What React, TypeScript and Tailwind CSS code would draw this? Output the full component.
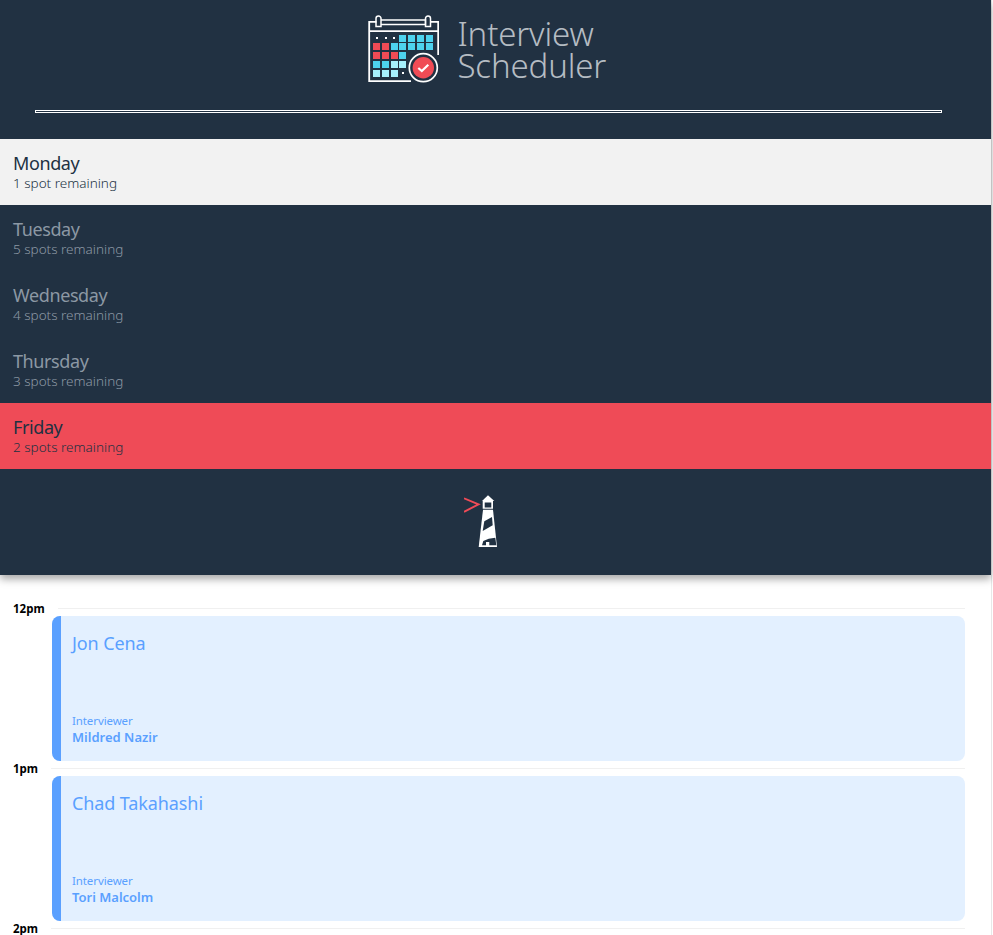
const days = [
  { name: "Monday", spots: "1 spot remaining", state: "selected" },
  { name: "Tuesday", spots: "5 spots remaining", state: "idle" },
  { name: "Wednesday", spots: "4 spots remaining", state: "idle" },
  { name: "Thursday", spots: "3 spots remaining", state: "idle" },
  { name: "Friday", spots: "2 spots remaining", state: "hover" },
];

const appointments = [
  { time: "12pm", student: "Jon Cena", interviewer: "Mildred Nazir" },
  { time: "1pm", student: "Chad Takahashi", interviewer: "Tori Malcolm" },
];

const dayStyles: Record<string, string> = {
  selected: "bg-[#f2f2f2] text-[#213142]",
  idle: "bg-[#213142] text-[#8c98a4]",
  hover: "bg-[#ef4b57] text-[#213142]",
};

const cyan = "#4dd2ee";
const red = "#f04b55";
const pale = "#a6f0fd";

const cellX = [5, 14, 23, 31, 40, 49, 58];
const cellY = [20, 28, 37, 46, 55];

// [col, row, colour] for the calendar's day cells
const cells: [number, number, string][] = [
  [3, 0, cyan], [4, 0, cyan], [5, 0, cyan], [6, 0, cyan],
  [0, 1, red], [1, 1, red], [2, 1, cyan], [3, 1, cyan], [4, 1, cyan], [5, 1, cyan], [6, 1, cyan],
  [0, 2, red], [1, 2, red], [2, 2, red], [3, 2, cyan],
  [0, 3, cyan], [1, 3, cyan], [2, 3, pale], [3, 3, pale],
  [0, 4, pale], [1, 4, pale], [2, 4, pale],
];

const CalendarLogo = () => (
  <svg width="71" height="68" viewBox="0 0 71 68" fill="none" className="shrink-0">
    <path d="M62 6.8H70.2V40M8.5 6.8H1.2V66.2H43" stroke="white" strokeWidth="1.8" />
    <path d="M1.2 16.2H70.2" stroke="white" strokeWidth="1.8" />
    <path d="M13 5H57.5V9.5H13" stroke="white" strokeWidth="1.4" />
    <path d="M8 11.5V3.5a2.5 2.5 0 0 1 5 0V11.5Z" stroke="white" strokeWidth="1.5" />
    <path d="M57.5 11.5V3.5a2.5 2.5 0 0 1 5 0V11.5Z" stroke="white" strokeWidth="1.5" />
    <rect x="8" y="22" width="2" height="2" fill="white" />
    <rect x="17" y="22" width="2" height="2" fill="white" />
    <rect x="25" y="22" width="2" height="2" fill="white" />
    <rect x="34" y="57" width="2" height="2" fill="white" />
    {cells.map(([col, row, fill], i) => (
      <rect key={i} x={cellX[col]} y={cellY[row]} width="7" height="7" fill={fill} />
    ))}
    <circle cx="55.3" cy="52.7" r="14" fill="#213142" stroke="white" strokeWidth="1.7" />
    <circle cx="55.3" cy="52.7" r="10.7" fill={red} />
    <path d="M50.3 53L53.8 56L60.3 49.7" stroke="white" strokeWidth="2.2" />
  </svg>
);

const Lighthouse = () => (
  <svg width="34" height="53" viewBox="0 0 34 53">
    <path d="M0 3.3L14.5 9.4L0 16.8" fill="none" stroke="#ef4b57" strokeWidth="1.9" />
    <path d="M24 0.3L30.3 6H18Z" fill="white" />
    <path d="M18.7 6H29V13.7H18.7ZM20.7 7.5V12.5H27.3V7.5Z" fill="white" fillRule="evenodd" />
    <path d="M19 14.7H29L33 52H14.7Z" fill="white" />
    <path d="M20.3 26.3L28 22L28.7 30.3L18.7 36Z" fill="#213142" />
    <path d="M18 50.3L19.3 46L24.7 43.7L31.3 42.7L32.3 50.3H25.3V47H22V50.3Z" fill="#213142" />
  </svg>
);

const TimeRow = ({ time }: { time: string }) => (
  <div className="flex items-center gap-[13px] h-0">
    <span className="mt-[2px] text-[11.5px] leading-none font-bold text-black">{time}</span>
    <hr className="flex-1 border-0 h-px bg-[#f0f0f0]" />
  </div>
);

export default function App() {
  return (
    <div className="h-[935px] overflow-hidden bg-white font-['Noto_Sans',sans-serif]">
      <main className="w-[992px] h-full border-r border-[#e8e8e8]">
        <nav className="relative z-10 bg-[#213142] shadow-[0_4px_8px_rgba(0,0,0,0.35)]">
          <header className="h-[139px] pl-[35px] pr-[49px] pt-[15px]">
            <div className="flex justify-center gap-[19px] h-[68px] pr-[2px]">
              <CalendarLogo />
              <h1 className="text-[33px] leading-[32px] pt-[3px] font-light tracking-[-0.15px] text-[#b5bcc3] w-[150px]">
                Interview Scheduler
              </h1>
            </div>
            <hr className="mt-[27px] h-[3px] border border-white bg-[#213142]" />
          </header>
          <ul>
            {days.map((day) => (
              <li key={day.name} className={`h-[66px] pl-[13px] pt-[14px] ${dayStyles[day.state]}`}>
                <h2 className="text-[18px] leading-[21px] font-normal tracking-[-0.4px]">{day.name}</h2>
                <h3 className="text-[13.5px] leading-[18px] font-light">{day.spots}</h3>
              </li>
            ))}
          </ul>
          <div className="h-[106px] flex justify-center pt-[26px] pr-[29px]">
            <Lighthouse />
          </div>
        </nav>
        <section className="pt-[33px] pl-[13px] pr-[26px]">
          {appointments.map((appt) => (
            <article key={appt.time} className="h-[160px]">
              <TimeRow time={appt.time} />
              <div className="ml-[39px] mt-[8px] h-[145px] flex overflow-hidden rounded-lg bg-[#e3f0ff] text-[#5aa0ff]">
                <div className="w-[9px] bg-[#5aa0ff]" />
                <div className="flex-1 pl-[11px] pt-[15px] pb-[15px] flex flex-col justify-between">
                  <h2 className="text-[18px] leading-[24px] tracking-[-0.1px]">{appt.student}</h2>
                  <div>
                    <p className="text-[11.5px] leading-[16px] tracking-[-0.1px]">Interviewer</p>
                    <p className="text-[13px] leading-[17px] font-semibold">{appt.interviewer}</p>
                  </div>
                </div>
              </div>
            </article>
          ))}
          <TimeRow time="2pm" />
        </section>
      </main>
    </div>
  );
}
